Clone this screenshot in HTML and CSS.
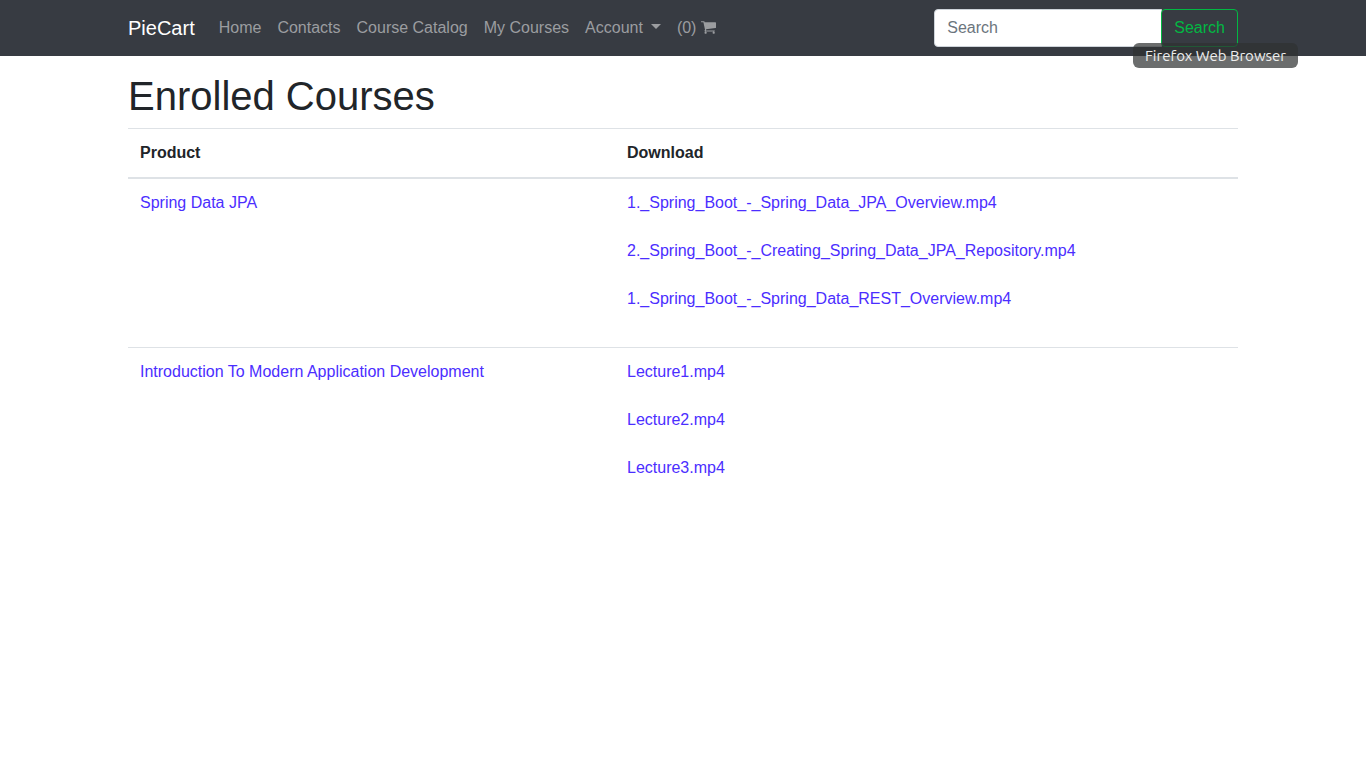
FILE: index.html
```html
<!DOCTYPE html>
<html lang="en">
<head>
<meta charset="utf-8">
<meta name="viewport" content="width=device-width, initial-scale=1">
<title>PieCart</title>
<link rel="stylesheet" href="styles.css">
</head>
<body>
<header class="navbar">
  <div class="container navbar-inner">
    <a class="brand" href="#">PieCart</a>
    <nav class="nav">
      <a class="nav-link" href="#">Home</a>
      <a class="nav-link" href="#">Contacts</a>
      <a class="nav-link" href="#">Course Catalog</a>
      <a class="nav-link" href="#">My Courses</a>
      <a class="nav-link dropdown" href="#">Account</a>
      <a class="nav-link" href="#">(0) <svg class="cart" viewBox="64 256 1664 1408" aria-hidden="true"><path d="M704 1536q0 52-38 90t-90 38-90-38-38-90 38-90 90-38 90 38 38 90zm896 0q0 52-38 90t-90 38-90-38-38-90 38-90 90-38 90 38 38 90zm128-1088v512q0 24-16.5 42.5t-40.500 21.500l-1044 122q13 60 13 70 0 16-24 64h920q26 0 45 19t19 45-19 45-45 19h-1024q-26 0-45-19t-19-45q0-11 8-31.500t16-36 21.500-40 15.500-29.500l-177-823h-204q-26 0-45-19t-19-45 19-45 45-19h256q16 0 28.500 6.500t19.500 15.500 13 24.500 8 26 5.500 29.500 4.500 26h1201q26 0 45 19t19 45z"/></svg></a>
    </nav>
    <form class="search">
      <input class="search-input" type="search" placeholder="Search" aria-label="Search">
      <button class="search-button" type="submit">Search</button>
      <span class="tooltip" role="tooltip">Firefox Web Browser</span>
    </form>
  </div>
</header>
<main class="container">
  <h1 class="title">Enrolled Courses</h1>
  <table class="table">
    <thead>
      <tr><th class="product" scope="col">Product</th><th scope="col">Download</th></tr>
    </thead>
    <tbody>
      <tr>
        <td><a class="link" href="#">Spring Data JPA</a></td>
        <td>
          <ul class="files">
            <li><a class="link" href="#">1._Spring_Boot_-_Spring_Data_JPA_Overview.mp4</a></li>
            <li><a class="link" href="#">2._Spring_Boot_-_Creating_Spring_Data_JPA_Repository.mp4</a></li>
            <li><a class="link" href="#">1._Spring_Boot_-_Spring_Data_REST_Overview.mp4</a></li>
          </ul>
        </td>
      </tr>
      <tr>
        <td><a class="link" href="#">Introduction To Modern Application Development</a></td>
        <td>
          <ul class="files">
            <li><a class="link" href="#">Lecture1.mp4</a></li>
            <li><a class="link" href="#">Lecture2.mp4</a></li>
            <li><a class="link" href="#">Lecture3.mp4</a></li>
          </ul>
        </td>
      </tr>
    </tbody>
  </table>
</main>
</body>
</html>
```
FILE: styles.css
```css
*, *::before, *::after { box-sizing: border-box; }

body {
  margin: 0;
  background: #fff;
  color: #212529;
  font-family: "Liberation Sans", Arial, sans-serif;
  font-size: 16px;
  line-height: 24px;
}

a { text-decoration: none; }

.container {
  width: 100%;
  max-width: 1140px;
  margin: 0 auto;
  padding: 0 15px;
}

.navbar {
  padding: 8px 0;
  background: #373b42;
}

.navbar-inner {
  display: flex;
  align-items: center;
}

.brand {
  margin-right: 16px;
  color: #fff;
  font-size: 20px;
  line-height: 30px;
}

.nav {
  display: flex;
  flex: 1;
}

.nav-link {
  padding: 8px;
  color: #9b9da0;
  white-space: nowrap;
}

.dropdown::after {
  content: "";
  display: inline-block;
  margin-left: 8px;
  border: 5px solid transparent;
  border-top-color: currentColor;
  border-bottom: 0;
  vertical-align: 4px;
}

.cart {
  width: 15px;
  height: 13px;
  fill: currentColor;
  vertical-align: -1px;
}

.search {
  position: relative;
  display: flex;
}

.search-input {
  width: 228px;
  height: 38px;
  padding: 6px 12px;
  border: 1px solid #ced4da;
  border-radius: 4px 0 0 4px;
  background: #fff;
  color: #495057;
  font: inherit;
  appearance: none;
}

.search-input::placeholder {
  color: #6c757d;
  opacity: 1;
}

.search-button {
  height: 38px;
  margin-left: -1px;
  padding: 6px 12px;
  border: 1px solid #02b843;
  border-radius: 4px;
  background: transparent;
  color: #02b843;
  font: inherit;
}

.tooltip {
  position: absolute;
  top: 34px;
  right: -60px;
  padding: 0 12px;
  border-radius: 6px;
  background: rgba(46, 50, 50, 0.71);
  color: #eee;
  font-family: Ubuntu, "Noto Sans", sans-serif;
  font-size: 15px;
  line-height: 25px;
  white-space: nowrap;
}

.title {
  margin: 16px 0 8px;
  font-size: 40px;
  font-weight: 400;
  line-height: 48px;
}

.table {
  width: 100%;
  border-collapse: collapse;
}

.table th,
.table td {
  padding: 12px;
  border-top: 1px solid #dee2e6;
  text-align: left;
  vertical-align: top;
}

.table thead th { border-bottom: 2px solid #dee2e6; }

.product { width: 487px; }

.link { color: #4b2eff; }

.files {
  margin: 0;
  padding: 0;
  list-style: none;
}

.files li { margin-bottom: 24px; }
```
